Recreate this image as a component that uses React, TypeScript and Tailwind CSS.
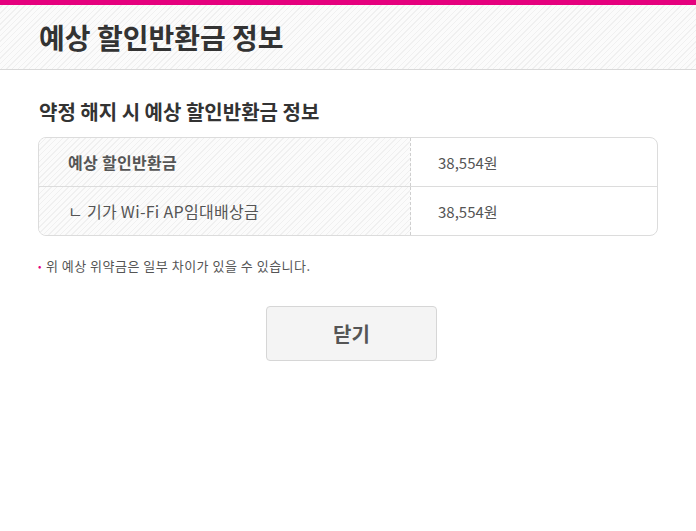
import React from 'react';

const stripe =
  'bg-[repeating-linear-gradient(-45deg,#fbfbfb_0px,#fbfbfb_3px,#f0f0f0_3px,#f0f0f0_4px)]';

const rows = [
  { label: '예상 할인반환금', value: '38,554원', strong: true },
  { label: 'ㄴ 기가 Wi-Fi AP임대배상금', value: '38,554원', strong: false },
];

export default function App() {
  return (
    <div className="w-[696px] h-[531px] bg-white font-['Noto_Sans_CJK_KR','Noto_Sans',sans-serif] text-[#333]">
      <div className="h-[5px] bg-[#e5007e]" />
      <div className={`h-[65px] flex items-center px-[39px] border-b border-[#d9d9d9] ${stripe}`}>
        <h1 className="text-[28px] font-bold text-[#333] leading-none">예상 할인반환금 정보</h1>
      </div>

      <div className="px-[38px] pt-[32px]">
        <h2 className="text-[20px] font-bold leading-none text-[#333] pl-px">약정 해지 시 예상 할인반환금 정보</h2>

        <div className="mt-[15px] border border-[#dcdcdc] rounded-[8px] overflow-hidden">
          {rows.map((r, i) => (
            <div key={i} className={`flex ${i > 0 ? 'h-[49px] border-t border-[#dcdcdc]' : 'h-[48px]'}`}>
              <div className={`w-[372px] flex items-center pl-[29px] border-r border-dashed border-[#cfcfcf] ${stripe}`}>
                <span className={`text-[16px] tracking-[0.3px] text-[#555] leading-none ${r.strong ? 'font-bold' : ''}`}>{r.label}</span>
              </div>
              <div className="flex-1 flex items-center pl-[27px]">
                <span className="text-[15px] text-[#555] leading-none">{r.value}</span>
              </div>
            </div>
          ))}
        </div>

        <p className="mt-[23px] flex items-center text-[13px] tracking-[0.5px] text-[#555] leading-none">
          <span className="text-[#e5007e] mr-[4px] text-[10px]">•</span>
          위 예상 위약금은 일부 차이가 있을 수 있습니다.
        </p>

        <div className="flex justify-center mt-[34px]">
          <button className="w-[171px] h-[55px] bg-[#f4f4f4] border border-[#d6d6d6] rounded-[4px] text-[20px] font-bold text-[#555] ml-[7px]">
            닫기
          </button>
        </div>
      </div>
    </div>
  );
}
